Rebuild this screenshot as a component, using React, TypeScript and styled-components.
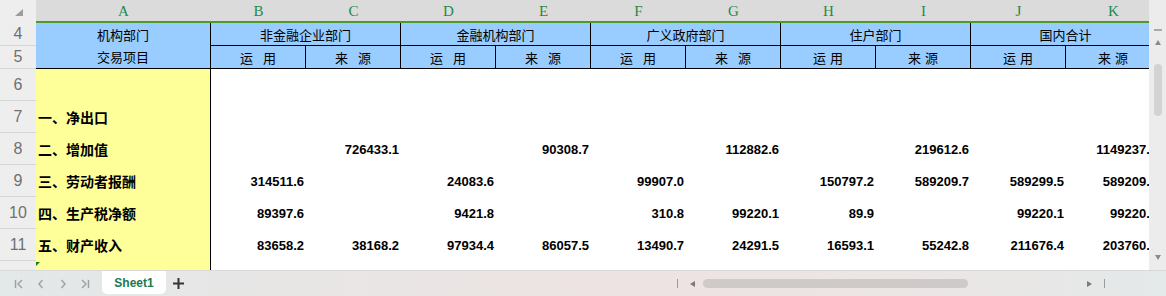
import React from "react";
import styled, { createGlobalStyle } from "styled-components";

const GlobalStyle = createGlobalStyle`
  html, body { margin: 0; padding: 0; }
  body {
    width: 1166px;
    height: 296px;
    overflow: hidden;
    background: #ffffff;
    font-family: "Liberation Sans", Arial, sans-serif;
  }
  * { box-sizing: border-box; }
`;

const CJK = `"Noto Sans CJK SC", "Noto Sans", sans-serif`;

const Window = styled.div`
  width: 1166px;
  height: 296px;
  display: flex;
  flex-direction: column;
  overflow: hidden;
`;

const SheetArea = styled.div`
  display: flex;
  height: 270px;
`;

const Viewport = styled.div`
  width: 1149px;
  height: 270px;
  overflow: hidden;
`;

const Grid = styled.div`
  display: grid;
  grid-template-columns: 36px 175px repeat(10, 95px);
  grid-template-rows: 23px 23px 23px repeat(6, 32px) 32px;
  width: 1161px;
`;

const Corner = styled.div`
  background: #eeeeee;
  display: flex;
  align-items: flex-start;
  justify-content: flex-start;
  padding: 9px 0 0 15px;
`;

const ColLetter = styled.div`
  background: #dbdbdb;
  border-bottom: 2px solid #4c9a2c;
  color: #1f8a4c;
  font-family: "Liberation Serif", serif;
  font-size: 15px;
  display: flex;
  align-items: center;
  justify-content: center;
  padding-top: 1px;
`;

const RowNum = styled.div`
  background: #eeeeee;
  border-bottom: 1px solid #d6d6d6;
  color: #707070;
  font-family: "Liberation Sans", Arial, sans-serif;
  font-size: 16px;
  display: flex;
  align-items: center;
  justify-content: center;
`;

const HeadCell = styled.div<{ $span?: number; $rows?: number }>`
  grid-column: span ${(p) => p.$span ?? 1};
  grid-row: span ${(p) => p.$rows ?? 1};
  background: #99ccff;
  border-right: 1px solid #000;
  border-bottom: 1px solid #000;
  font-family: ${CJK};
  font-size: 13px;
  color: #000;
  display: flex;
  flex-direction: column;
  align-items: center;
  justify-content: space-around;
  white-space: nowrap;
`;

const Pair = styled.div<{ $gap: number }>`
  display: flex;
  gap: ${(p) => p.$gap}px;
`;

const LabelCell = styled.div`
  background: #ffff99;
  border-right: 1px solid #000;
  font-family: ${CJK};
  font-weight: 700;
  font-size: 14px;
  color: #000;
  display: flex;
  align-items: center;
  padding-left: 2px;
  position: relative;
  white-space: nowrap;
`;

const ErrorMark = styled.div`
  position: absolute;
  left: 0;
  top: 1px;
  width: 0;
  height: 0;
  border-top: 4px solid #1e7a1e;
  border-right: 4px solid transparent;
`;

const NumCell = styled.div<{ $pr?: number }>`
  background: #ffffff;
  font-family: "Liberation Sans", Arial, sans-serif;
  font-weight: 700;
  font-size: 13px;
  color: #000;
  display: flex;
  align-items: center;
  justify-content: flex-end;
  padding-right: ${(p) => p.$pr ?? 2}px;
  white-space: nowrap;
`;

const VScroll = styled.div`
  width: 17px;
  height: 270px;
  background: #ececec;
  display: flex;
  flex-direction: column;
  align-items: center;
  padding-top: 29px;
`;

const Dash = styled.div`
  width: 8px;
  height: 2px;
  background: #a9a9a9;
`;

const VThumb = styled.div`
  width: 8px;
  height: 52px;
  border-radius: 4px;
  background: #d3d3d3;
  margin-top: 19px;
`;

const Spacer = styled.div<{ $fixed?: number }>`
  flex: ${(p) => (p.$fixed ? `0 0 ${p.$fixed}px` : "1")};
`;

const TabBar = styled.div`
  height: 26px;
  border-top: 1px solid #d9d9d9;
  background: linear-gradient(90deg, #e3e8e8 0%, #e9e6e5 30%, #ede3e2 55%, #ebe6e5 80%, #e4e9e9 100%);
  display: flex;
  align-items: flex-start;
  padding-left: 8px;
`;

const NavButton = styled.div`
  width: 22px;
  height: 25px;
  display: flex;
  align-items: center;
  justify-content: center;
`;

const SheetTab = styled.div`
  margin-left: 6px;
  width: 64px;
  height: 23px;
  background: #ffffff;
  border-radius: 0 0 5px 5px;
  color: #1c7a4c;
  font-weight: 700;
  font-size: 12px;
  display: flex;
  align-items: center;
  justify-content: center;
  padding-top: 1px;
`;

const AddButton = styled.div`
  width: 24px;
  height: 25px;
  display: flex;
  align-items: center;
  justify-content: center;
`;

const HScroll = styled.div`
  margin-left: auto;
  padding-right: 61px;
  height: 25px;
  display: flex;
  align-items: center;
`;

const Bar = styled.div<{ $ml?: number }>`
  width: 1px;
  height: 9px;
  background: #9a9a9a;
  margin-left: ${(p) => p.$ml ?? 0}px;
`;

const Tri = styled.div<{ $dir: "left" | "right"; $ml: number }>`
  width: 0;
  height: 0;
  margin-left: ${(p) => p.$ml}px;
  border-top: 3.5px solid transparent;
  border-bottom: 3.5px solid transparent;
  ${(p) =>
    p.$dir === "left"
      ? "border-right: 5px solid #7a7a7a;"
      : "border-left: 5px solid #7a7a7a;"}
`;

const VTri = styled.div<{ $dir: "up" | "down"; $mt?: number }>`
  width: 0;
  height: 0;
  margin-top: ${(p) => p.$mt ?? 0}px;
  border-left: 3.5px solid transparent;
  border-right: 3.5px solid transparent;
  ${(p) =>
    p.$dir === "up"
      ? "border-bottom: 5px solid #8a8a8a;"
      : "border-top: 5px solid #8a8a8a;"}
`;

const Track = styled.div`
  margin-left: 8px;
  width: 380px;
  height: 9px;
  display: flex;
`;

const HThumb = styled.div`
  width: 265px;
  height: 9px;
  border-radius: 4.5px;
  background: #cfcaca;
`;

const letters = ["A", "B", "C", "D", "E", "F", "G", "H", "I", "J", "K"];

const groups = ["非金融企业部门", "金融机构部门", "广义政府部门", "住户部门", "国内合计"];

type Row = { n: number; label: string; vals: string[] };

const rows: Row[] = [
  { n: 6, label: "", vals: ["", "", "", "", "", "", "", "", "", ""] },
  { n: 7, label: "一、净出口", vals: ["", "", "", "", "", "", "", "", "", ""] },
  {
    n: 8,
    label: "二、增加值",
    vals: ["", "726433.1", "", "90308.7", "", "112882.6", "", "219612.6", "", "1149237.0"],
  },
  {
    n: 9,
    label: "三、劳动者报酬",
    vals: ["314511.6", "", "24083.6", "", "99907.0", "", "150797.2", "589209.7", "589299.5", "589209.7"],
  },
  {
    n: 10,
    label: "四、生产税净额",
    vals: ["89397.6", "", "9421.8", "", "310.8", "99220.1", "89.9", "", "99220.1", "99220.1"],
  },
  {
    n: 11,
    label: "五、财产收入",
    vals: ["83658.2", "38168.2", "97934.4", "86057.5", "13490.7", "24291.5", "16593.1", "55242.8", "211676.4", "203760.6"],
  },
];

const NavIcon: React.FC<{ kind: "first" | "prev" | "next" | "last" }> = ({ kind }) => (
  <svg width="10" height="10" viewBox="0 0 10 10" fill="none" stroke="#a3a3a3" strokeWidth="1.5">
    {kind === "first" && (
      <>
        <line x1="1.5" y1="1" x2="1.5" y2="9" />
        <polyline points="8,1 4,5 8,9" />
      </>
    )}
    {kind === "prev" && <polyline points="6.5,1 3,5 6.5,9" />}
    {kind === "next" && <polyline points="3.5,1 7,5 3.5,9" />}
    {kind === "last" && (
      <>
        <polyline points="2,1 6,5 2,9" />
        <line x1="8.5" y1="1" x2="8.5" y2="9" />
      </>
    )}
  </svg>
);

export default function App() {
  return (
    <>
      <GlobalStyle />
      <Window>
        <SheetArea>
          <Viewport>
            <Grid>
              <Corner>
                <svg width="8" height="7" viewBox="0 0 8 7">
                  <polygon points="8,0 8,7 0,7" fill="#9c9c9c" />
                </svg>
              </Corner>
              {letters.map((l) => (
                <ColLetter key={l}>{l}</ColLetter>
              ))}

              <RowNum>4</RowNum>
              <HeadCell $rows={2}>
                <span>机构部门</span>
                <span>交易项目</span>
              </HeadCell>
              {groups.map((g) => (
                <HeadCell key={g} $span={2}>
                  {g}
                </HeadCell>
              ))}

              <RowNum>5</RowNum>
              {groups.map((g, i) => {
                const gap = i < 3 ? 10 : 4;
                return (
                  <React.Fragment key={g}>
                    <HeadCell>
                      <Pair $gap={gap}>
                        <span>运</span>
                        <span>用</span>
                      </Pair>
                    </HeadCell>
                    <HeadCell>
                      <Pair $gap={gap}>
                        <span>来</span>
                        <span>源</span>
                      </Pair>
                    </HeadCell>
                  </React.Fragment>
                );
              })}

              {rows.map((r) => (
                <React.Fragment key={r.n}>
                  <RowNum>{r.n}</RowNum>
                  <LabelCell>{r.label}</LabelCell>
                  {r.vals.map((v, i) => (
                    <NumCell key={i} $pr={i === 9 ? 4 : 2}>
                      {v}
                    </NumCell>
                  ))}
                </React.Fragment>
              ))}

              <RowNum>12</RowNum>
              <LabelCell>
                <ErrorMark />
              </LabelCell>
              {Array.from({ length: 10 }).map((_, i) => (
                <NumCell key={i} />
              ))}
            </Grid>
          </Viewport>
          <VScroll>
            <Dash />
            <VTri $dir="up" $mt={9} />
            <VThumb />
            <Spacer />
            <VTri $dir="down" />
            <Spacer $fixed={10} />
          </VScroll>
        </SheetArea>
        <TabBar>
          <NavButton>
            <NavIcon kind="first" />
          </NavButton>
          <NavButton>
            <NavIcon kind="prev" />
          </NavButton>
          <NavButton>
            <NavIcon kind="next" />
          </NavButton>
          <NavButton>
            <NavIcon kind="last" />
          </NavButton>
          <SheetTab>Sheet1</SheetTab>
          <AddButton>
            <svg width="11" height="11" viewBox="0 0 11 11" stroke="#333" strokeWidth="2">
              <line x1="5.5" y1="0" x2="5.5" y2="11" />
              <line x1="0" y1="5.5" x2="11" y2="5.5" />
            </svg>
          </AddButton>
          <HScroll>
            <Bar />
            <Tri $dir="left" $ml={12} />
            <Track>
              <HThumb />
            </Track>
            <Tri $dir="right" $ml={4} />
            <Bar $ml={12} />
          </HScroll>
        </TabBar>
      </Window>
    </>
  );
}
